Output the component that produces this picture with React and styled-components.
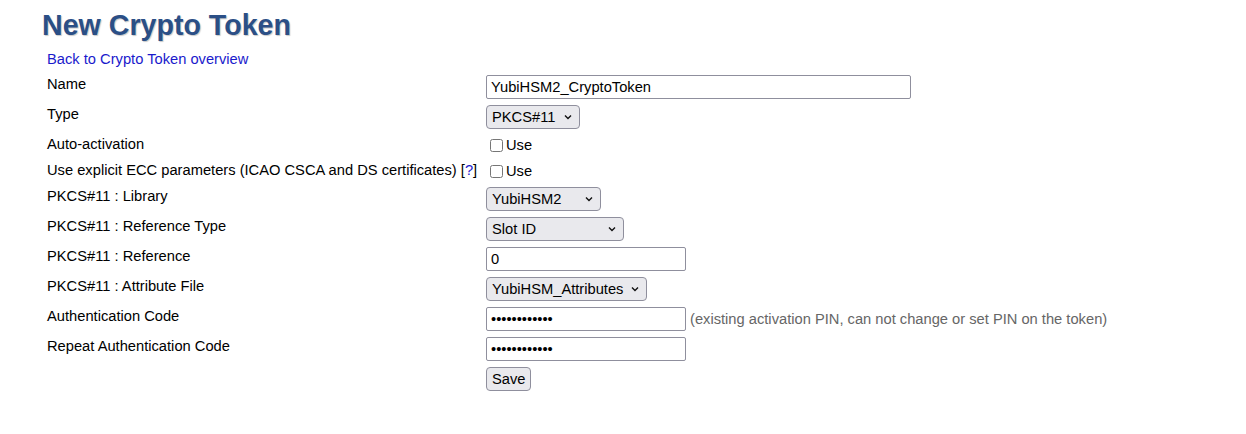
import React from "react";
import styled, { createGlobalStyle } from "styled-components";

const GlobalStyle = createGlobalStyle`
  html, body { margin: 0; padding: 0; background: #fff; }
  body {
    font-family: "Liberation Sans", Arial, sans-serif;
    font-size: 14.7px;
    color: #000;
  }
`;

const Page = styled.div`
  padding: 0 0 0 42px;
`;

const Title = styled.h1`
  margin: 0;
  padding-top: 9px;
  height: 37px;
  font-size: 28.6px;
  line-height: 32px;
  font-weight: bold;
  color: #2b4f86;
  text-shadow: 1px 1px 1px #c8c8c8;
`;

const Form = styled.div`
  display: grid;
  grid-template-columns: 439px 1fr;
  padding-left: 5px;
`;

const LinkRow = styled.div`
  grid-column: 1 / span 2;
  height: 26px;
  box-sizing: border-box;
  padding-top: 5px;
  line-height: 17px;
`;

const Link = styled.a`
  color: #1a1acc;
  text-decoration: none;
  cursor: pointer;
`;

const Label = styled.div`
  padding-top: 4px;
  height: ${(p) => (p.$check ? 26 : 30)}px;
  box-sizing: border-box;
  line-height: 17px;
`;

const Value = styled.div`
  height: ${(p) => (p.$check ? 26 : 30)}px;
  box-sizing: border-box;
  display: flex;
  align-items: center;
  gap: 4px;
`;

const TextInput = styled.input`
  box-sizing: border-box;
  width: ${(p) => p.$w}px;
  height: 24px;
  margin: 0;
  padding: 1px 4px;
  font-family: "Liberation Sans", Arial, sans-serif;
  font-size: 14.7px;
  color: #000;
  border: 1px solid #8f8f9d;
  border-radius: 2px;
  background: #fff;
`;

const SelectWrap = styled.div`
  position: relative;
  display: inline-flex;
`;

const Select = styled.select`
  appearance: none;
  -webkit-appearance: none;
  box-sizing: border-box;
  width: ${(p) => p.$w}px;
  height: 24px;
  margin: 0;
  padding: 0 20px 0 5px;
  font-family: "Liberation Sans", Arial, sans-serif;
  font-size: 14.7px;
  color: #000;
  background: #e9e9ed;
  border: 1px solid #8f8f9d;
  border-radius: 4px;
`;

const Chevron = styled.svg`
  position: absolute;
  right: 8px;
  top: 9px;
  width: 8px;
  height: 6px;
  pointer-events: none;
`;

const Dropdown = ({ w, children }) => (
  <SelectWrap>
    <Select $w={w}>{children}</Select>
    <Chevron viewBox="0 0 8 6">
      <path d="M1 1.5 L4 4.5 L7 1.5" fill="none" stroke="#111" strokeWidth="1.4" />
    </Chevron>
  </SelectWrap>
);

const CheckLabel = styled.label`
  display: flex;
  align-items: center;
  line-height: 17px;
`;

const Check = styled.input`
  width: 13px;
  height: 13px;
  margin: 0 3px 0 4px;
`;

const Hint = styled.span`
  color: #666;
`;

const Button = styled.button`
  box-sizing: border-box;
  height: 24px;
  margin: 0;
  padding: 0 5px;
  font-family: "Liberation Sans", Arial, sans-serif;
  font-size: 14.7px;
  color: #000;
  background: #e9e9ed;
  border: 1px solid #8f8f9d;
  border-radius: 4px;
`;

export default function App() {
  return (
    <>
      <GlobalStyle />
      <Page>
        <Title>New Crypto Token</Title>
        <Form>
          <LinkRow>
            <Link href="#">Back to Crypto Token overview</Link>
          </LinkRow>

          <Label>Name</Label>
          <Value>
            <TextInput $w={425} defaultValue="YubiHSM2_CryptoToken" />
          </Value>

          <Label>Type</Label>
          <Value>
            <Dropdown w={94}>
              <option>PKCS#11</option>
            </Dropdown>
          </Value>

          <Label $check>Auto-activation</Label>
          <Value $check>
            <CheckLabel>
              <Check type="checkbox" />
              Use
            </CheckLabel>
          </Value>

          <Label $check>
            Use explicit ECC parameters (ICAO CSCA and DS certificates) [<Link href="#">?</Link>]
          </Label>
          <Value $check>
            <CheckLabel>
              <Check type="checkbox" />
              Use
            </CheckLabel>
          </Value>

          <Label>PKCS#11 : Library</Label>
          <Value>
            <Dropdown w={115}>
              <option>YubiHSM2</option>
            </Dropdown>
          </Value>

          <Label>PKCS#11 : Reference Type</Label>
          <Value>
            <Dropdown w={138}>
              <option>Slot ID</option>
            </Dropdown>
          </Value>

          <Label>PKCS#11 : Reference</Label>
          <Value>
            <TextInput $w={200} defaultValue="0" />
          </Value>

          <Label>PKCS#11 : Attribute File</Label>
          <Value>
            <Dropdown w={161}>
              <option>YubiHSM_Attributes</option>
            </Dropdown>
          </Value>

          <Label>Authentication Code</Label>
          <Value>
            <TextInput $w={200} type="password" defaultValue="************" />
            <Hint>(existing activation PIN, can not change or set PIN on the token)</Hint>
          </Value>

          <Label>Repeat Authentication Code</Label>
          <Value>
            <TextInput $w={200} type="password" defaultValue="************" />
          </Value>

          <Label />
          <Value>
            <Button>Save</Button>
          </Value>
        </Form>
      </Page>
    </>
  );
}
